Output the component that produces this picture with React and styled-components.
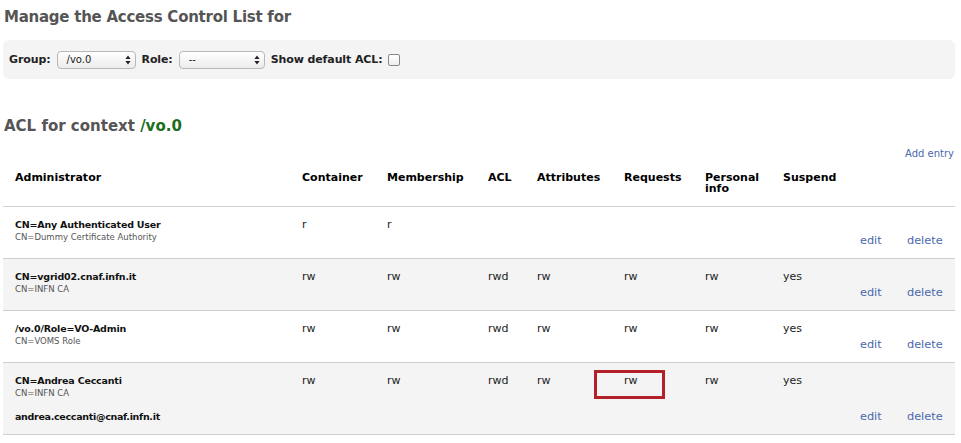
import React from "react";
import styled, { createGlobalStyle } from "styled-components";

const Global = createGlobalStyle`
  html, body { margin: 0; padding: 0; background: #fff; }
  body { font-family: "DejaVu Sans", "Liberation Sans", sans-serif; color: #222; }
`;

const Page = styled.div`
  padding: 0 6px 0 3px;
  width: 952px;
`;

const Title = styled.h2`
  margin: 0;
  padding: 8px 0 0 1px;
  font-size: 15px;
  line-height: 18px;
  letter-spacing: -0.25px;
  font-weight: bold;
  color: #555;
`;

const FilterBar = styled.div`
  margin-top: 14px;
  height: 39px;
  background: #f4f4f4;
  border-radius: 6px;
  display: flex;
  align-items: center;
  gap: 6px;
  padding: 0 6px;
`;

const Label = styled.span`
  font-size: 11px;
  font-weight: bold;
  color: #222;
  letter-spacing: -0.1px;
`;

const SelectBox = styled.div`
  width: ${(p) => p.$w}px;
  height: 18px;
  box-sizing: border-box;
  border: 1px solid #b8b8b8;
  border-radius: 4px;
  background: linear-gradient(#ffffff, #ececec);
  display: flex;
  align-items: center;
  justify-content: space-between;
  padding: 0 4px 0 9px;
  font-size: 10px;
  color: #222;
`;

const Arrows = () => (
  <svg width="6" height="10" viewBox="0 0 6 10">
    <path d="M3 0.5 L5.6 4 L0.4 4 Z M3 9.5 L5.6 6 L0.4 6 Z" fill="#222" />
  </svg>
);

const Check = styled.span`
  width: 10px;
  height: 10px;
  border: 1px solid #888;
  border-radius: 2px;
  background: linear-gradient(#fff, #eee);
  margin-left: -1px;
`;

const Heading = styled.h3`
  margin: 0;
  margin-top: 38px;
  padding-left: 1px;
  font-size: 15px;
  line-height: 18px;
  font-weight: bold;
  color: #555;
`;

const Context = styled.span`
  color: #1c6e1c;
`;

const AddEntry = styled.div`
  text-align: right;
  font-size: 10px;
  line-height: 12px;
  margin-top: 13px;
  color: #4a68ad;
  padding-right: 1px;
`;

const cols = "287px 85px 101px 49px 87px 81px 78px 77px 47px 60px";

const HeadRow = styled.div`
  display: grid;
  grid-template-columns: ${cols};
  padding: 12px 0 12px;
  border-bottom: 1px solid #cfcfcf;
`;

const Th = styled.div`
  padding-left: 12px;
  padding-right: 4px;
  font-size: 11px;
  line-height: 11px;
  font-weight: bold;
  color: #000;
`;

const Row = styled.div`
  display: grid;
  grid-template-columns: ${cols};
  padding: 11px 0 11px;
  min-height: 29px;
  border-bottom: 1px solid #cfcfcf;
  background: ${(p) => (p.$alt ? "#f4f4f4" : "#fff")};
`;

const Td = styled.div`
  position: relative;
  padding-left: 12px;
  font-size: 11px;
  line-height: 13px;
  color: #222;
`;

const ActionCell = styled.div`
  align-self: end;
  padding-left: 12px;
  font-size: 11.3px;
  line-height: 12px;
  color: #4a68ad;
`;

const Name = styled.div`
  font-size: 9.5px;
  line-height: 13px;
  letter-spacing: -0.2px;
  font-weight: bold;
  color: #111;
`;

const Sub = styled.div`
  font-size: 8.5px;
  line-height: 12px;
  color: #555;
`;

const Email = styled.div`
  margin-top: 11px;
  font-size: 9.5px;
  line-height: 13px;
  letter-spacing: -0.3px;
  font-weight: bold;
  color: #111;
`;

const Highlight = styled.span`
  position: absolute;
  left: -18px;
  top: -4px;
  width: 71px;
  height: 29px;
  box-sizing: border-box;
  border: 3px solid #b3202a;
`;

const rows = [
  {
    name: "CN=Any Authenticated User",
    ca: "CN=Dummy Certificate Authority",
    v: ["r", "r", "", "", "", "", ""],
  },
  {
    name: "CN=vgrid02.cnaf.infn.it",
    ca: "CN=INFN CA",
    v: ["rw", "rw", "rwd", "rw", "rw", "rw", "yes"],
  },
  {
    name: "/vo.0/Role=VO-Admin",
    ca: "CN=VOMS Role",
    v: ["rw", "rw", "rwd", "rw", "rw", "rw", "yes"],
  },
  {
    name: "CN=Andrea Ceccanti",
    ca: "CN=INFN CA",
    email: "andrea.ceccanti@cnaf.infn.it",
    v: ["rw", "rw", "rwd", "rw", "rw", "rw", "yes"],
    highlight: 4,
  },
];

const headers = [
  "Administrator",
  "Container",
  "Membership",
  "ACL",
  "Attributes",
  "Requests",
  "Personal info",
  "Suspend",
  "",
  "",
];

export default function App() {
  return (
    <Page>
      <Global />
      <Title>Manage the Access Control List for</Title>
      <FilterBar>
        <Label>Group:</Label>
        <SelectBox $w={79}>
          <span>/vo.0</span>
          <Arrows />
        </SelectBox>
        <Label>Role:</Label>
        <SelectBox $w={86}>
          <span>--</span>
          <Arrows />
        </SelectBox>
        <Label>Show default ACL:</Label>
        <Check />
      </FilterBar>
      <Heading>
        ACL for context <Context>/vo.0</Context>
      </Heading>
      <AddEntry>Add entry</AddEntry>
      <HeadRow>
        {headers.map((h, i) => (
          <Th key={i}>{h}</Th>
        ))}
      </HeadRow>
      {rows.map((r, i) => (
        <Row key={i} $alt={i % 2 === 1}>
          <Td>
            <Name>{r.name}</Name>
            <Sub>{r.ca}</Sub>
            {r.email && <Email>{r.email}</Email>}
          </Td>
          {r.v.map((v, j) => (
            <Td key={j}>
              {v}
              {r.highlight === j && <Highlight />}
            </Td>
          ))}
          <ActionCell>edit</ActionCell>
          <ActionCell>delete</ActionCell>
        </Row>
      ))}
    </Page>
  );
}
